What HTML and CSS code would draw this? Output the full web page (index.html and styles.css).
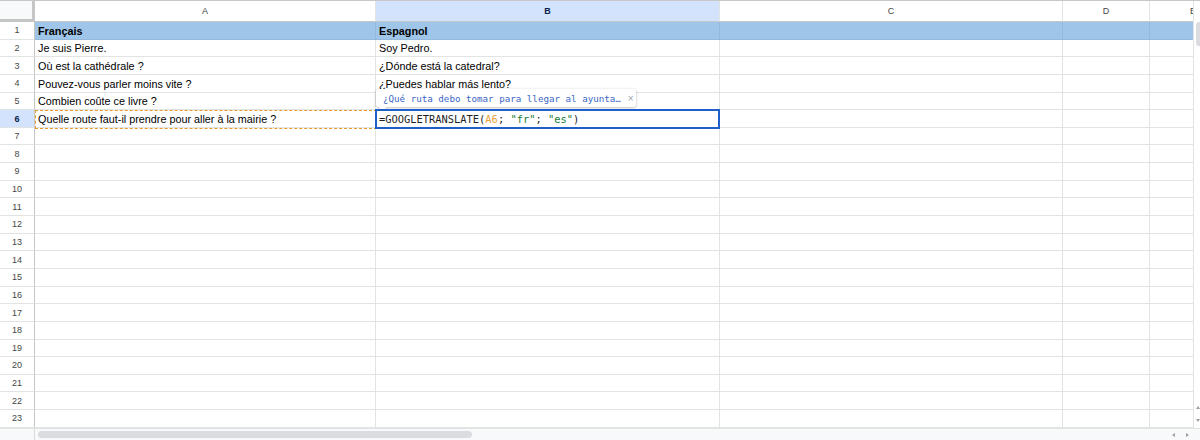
FILE: index.html
```html
<!DOCTYPE html>
<html lang="fr">
<head>
<meta charset="utf-8">
<link rel="stylesheet" href="styles.css">
</head>
<body>
<div class="app">
  <div class="main">
    <div class="grid">
      <div class="row head">
        <div class="c rh corner"></div>
        <div class="c ca">A</div>
        <div class="c cb sel">B</div>
        <div class="c cc">C</div>
        <div class="c cd">D</div>
        <div class="c ce">E</div>
      </div>
      <div class="row r1">
        <div class="c rh">1</div>
        <div class="c ca t b">Français</div>
        <div class="c cb t b">Espagnol</div>
        <div class="c cc"></div>
        <div class="c cd"></div>
        <div class="c ce"></div>
      </div>
      <div class="row">
        <div class="c rh">2</div>
        <div class="c ca t">Je suis Pierre.</div>
        <div class="c cb t">Soy Pedro.</div>
        <div class="c cc"></div><div class="c cd"></div><div class="c ce"></div>
      </div>
      <div class="row">
        <div class="c rh">3</div>
        <div class="c ca t">Où est la cathédrale ?</div>
        <div class="c cb t">¿Dónde está la catedral?</div>
        <div class="c cc"></div><div class="c cd"></div><div class="c ce"></div>
      </div>
      <div class="row">
        <div class="c rh">4</div>
        <div class="c ca t">Pouvez-vous parler moins vite ?</div>
        <div class="c cb t">¿Puedes hablar más lento?</div>
        <div class="c cc"></div><div class="c cd"></div><div class="c ce"></div>
      </div>
      <div class="row">
        <div class="c rh">5</div>
        <div class="c ca t">Combien coûte ce livre ?</div>
        <div class="c cb t"></div>
        <div class="c cc"></div><div class="c cd"></div><div class="c ce"></div>
      </div>
      <div class="row">
        <div class="c rh sel">6</div>
        <div class="c ca t">Quelle route faut-il prendre pour aller à la mairie ?</div>
        <div class="c cb t"></div>
        <div class="c cc"></div><div class="c cd"></div><div class="c ce"></div>
      </div>
      <div class="row"><div class="c rh">7</div><div class="c ca"></div><div class="c cb"></div><div class="c cc"></div><div class="c cd"></div><div class="c ce"></div></div>
      <div class="row"><div class="c rh">8</div><div class="c ca"></div><div class="c cb"></div><div class="c cc"></div><div class="c cd"></div><div class="c ce"></div></div>
      <div class="row"><div class="c rh">9</div><div class="c ca"></div><div class="c cb"></div><div class="c cc"></div><div class="c cd"></div><div class="c ce"></div></div>
      <div class="row"><div class="c rh">10</div><div class="c ca"></div><div class="c cb"></div><div class="c cc"></div><div class="c cd"></div><div class="c ce"></div></div>
      <div class="row"><div class="c rh">11</div><div class="c ca"></div><div class="c cb"></div><div class="c cc"></div><div class="c cd"></div><div class="c ce"></div></div>
      <div class="row"><div class="c rh">12</div><div class="c ca"></div><div class="c cb"></div><div class="c cc"></div><div class="c cd"></div><div class="c ce"></div></div>
      <div class="row"><div class="c rh">13</div><div class="c ca"></div><div class="c cb"></div><div class="c cc"></div><div class="c cd"></div><div class="c ce"></div></div>
      <div class="row"><div class="c rh">14</div><div class="c ca"></div><div class="c cb"></div><div class="c cc"></div><div class="c cd"></div><div class="c ce"></div></div>
      <div class="row"><div class="c rh">15</div><div class="c ca"></div><div class="c cb"></div><div class="c cc"></div><div class="c cd"></div><div class="c ce"></div></div>
      <div class="row"><div class="c rh">16</div><div class="c ca"></div><div class="c cb"></div><div class="c cc"></div><div class="c cd"></div><div class="c ce"></div></div>
      <div class="row"><div class="c rh">17</div><div class="c ca"></div><div class="c cb"></div><div class="c cc"></div><div class="c cd"></div><div class="c ce"></div></div>
      <div class="row"><div class="c rh">18</div><div class="c ca"></div><div class="c cb"></div><div class="c cc"></div><div class="c cd"></div><div class="c ce"></div></div>
      <div class="row"><div class="c rh">19</div><div class="c ca"></div><div class="c cb"></div><div class="c cc"></div><div class="c cd"></div><div class="c ce"></div></div>
      <div class="row"><div class="c rh">20</div><div class="c ca"></div><div class="c cb"></div><div class="c cc"></div><div class="c cd"></div><div class="c ce"></div></div>
      <div class="row"><div class="c rh">21</div><div class="c ca"></div><div class="c cb"></div><div class="c cc"></div><div class="c cd"></div><div class="c ce"></div></div>
      <div class="row"><div class="c rh">22</div><div class="c ca"></div><div class="c cb"></div><div class="c cc"></div><div class="c cd"></div><div class="c ce"></div></div>
      <div class="row"><div class="c rh">23</div><div class="c ca"></div><div class="c cb"></div><div class="c cc"></div><div class="c cd"></div><div class="c ce"></div></div>
    </div>
    <div class="vscroll">
      <div class="vthumb"></div>
      <div class="varrows">
        <span class="arr up"></span>
        <span class="arr down"></span>
      </div>
    </div>
  </div>
  <div class="hscroll">
    <div class="hcorner"></div>
    <div class="htrack"><div class="hthumb"></div></div>
    <div class="harrows">
      <span class="arr left"></span>
      <span class="arr right"></span>
    </div>
  </div>

  <div class="copy-marquee"></div>
  <div class="tip">
    <span class="tip-text">¿Qué ruta debo tomar para llegar al ayunta…</span>
    <span class="tip-x">×</span>
    <span class="tip-notch"></span>
  </div>
  <div class="editor"><span class="f-fn">=GOOGLETRANSLATE(</span><span class="f-ref">A6</span><span class="f-fn">; </span><span class="f-str">"fr"</span><span class="f-fn">; </span><span class="f-str">"es"</span><span class="f-fn">)</span></div>
</div>
</body>
</html>
```

FILE: styles.css
```css
* { box-sizing: border-box; }
html, body { margin: 0; padding: 0; background: #fff; }
body {
  font-family: "Liberation Sans", Arial, sans-serif;
  color: #000;
}
.app {
  position: relative;
  width: 1200px;
  height: 440px;
  overflow: hidden;
  display: flex;
  flex-direction: column;
}
.main {
  display: flex;
  height: 428px;
  border-top: 1px solid #c7c7c7;
}
.grid {
  width: 1193px;
  overflow: hidden;
  flex: none;
}
.row {
  display: flex;
  height: 17.65px;
}
.row.head { height: 21px; }
.c {
  flex: none;
  height: 100%;
  border-right: 1px solid #e2e3e3;
  border-bottom: 1px solid #e2e3e3;
  white-space: nowrap;
  overflow: hidden;
}
.rh { width: 35px; border-right-color: #c7c7c7; }
.ca { width: 341px; }
.cb { width: 344px; }
.cc { width: 343px; }
.cd { width: 87px; }
.ce { width: 87px; }

.head .c {
  font-size: 9px;
  color: #444746;
  display: flex;
  align-items: center;
  justify-content: center;
  border-bottom-color: #c7c7c7;
  background: #fff;
}
.head .corner {
  background: #f8f9fa;
  border-right: 3px solid #c4c7c5;
  border-bottom: 3px solid #c4c7c5;
}
.head .sel {
  background: #d3e3fd;
  font-weight: bold;
  color: #0b1f4a;
}

.rh {
  font-size: 9px;
  color: #444746;
  display: flex;
  align-items: center;
  justify-content: center;
}
.rh.sel {
  background: #d3e3fd;
  font-weight: bold;
  color: #0b1f4a;
}

.t {
  font-size: 10.8px;
  display: flex;
  align-items: flex-end;
  padding-left: 3px;
  padding-bottom: 1px;
  line-height: 14px;
}
.b { font-weight: bold; }

.r1 .ca, .r1 .cb, .r1 .cc, .r1 .cd, .r1 .ce {
  background: #9fc5e8;
  border-right-color: #94b9dc;
  border-bottom-color: #94b9dc;
}

.vscroll {
  flex: 1;
  position: relative;
  background: #fff;
  border-left: 1px solid #e2e3e3;
  display: flex;
  flex-direction: column;
  justify-content: space-between;
}
.vthumb {
  margin: 21px 0 0 2px;
  height: 24px;
  background: #dadce0;
  border-radius: 3px 0 0 3px;
}
.varrows {
  display: flex;
  flex-direction: column;
  gap: 10px;
  align-items: center;
  padding: 0 0 6px 1px;
}
.arr {
  width: 0;
  height: 0;
  display: block;
}
.arr.up { border-left: 2px solid transparent; border-right: 2px solid transparent; border-bottom: 3px solid #9aa0a6; }
.arr.down { border-left: 2px solid transparent; border-right: 2px solid transparent; border-top: 3px solid #9aa0a6; }
.arr.left { border-top: 2px solid transparent; border-bottom: 2px solid transparent; border-right: 3px solid #9aa0a6; }
.arr.right { border-top: 2px solid transparent; border-bottom: 2px solid transparent; border-left: 3px solid #9aa0a6; }

.hscroll {
  height: 12px;
  display: flex;
  background: #f8f9fa;
  border-top: 1px solid #e2e3e3;
}
.hcorner {
  width: 35px;
  border-right: 1px solid #dadce0;
  flex: none;
}
.htrack {
  flex: 1;
  padding: 2px 0 0 3px;
}
.hthumb {
  width: 434px;
  height: 7px;
  background: #dadce0;
  border-radius: 4px;
}
.harrows {
  width: 40px;
  display: flex;
  align-items: center;
  gap: 11px;
  padding-left: 12px;
  flex: none;
}

.copy-marquee {
  position: absolute;
  left: 35px;
  top: 110px;
  width: 342px;
  height: 19px;
  border: 1px dashed #e99a2c;
  border-right: none;
}
.editor {
  position: absolute;
  left: 375px;
  top: 109px;
  width: 345px;
  height: 20px;
  border: 2px solid #1f5fc9;
  background: #fff;
  font-family: "DejaVu Sans Mono", monospace;
  font-size: 10.4px;
  padding: 1px 0 0 2px;
  line-height: 14px;
  white-space: nowrap;
  color: #1f1f1f;
}
.f-ref { color: #e8a13c; }
.f-str { color: #188038; }

.tip {
  position: absolute;
  left: 376px;
  top: 89px;
  width: 260px;
  height: 18px;
  background: #fff;
  border-radius: 2px;
  box-shadow: 0 1px 3px rgba(60, 64, 67, 0.3), 0 0 1px rgba(60, 64, 67, 0.2);
  display: flex;
  align-items: center;
  padding-left: 7px;
  font-family: "DejaVu Sans Mono", monospace;
  font-size: 9.2px;
  color: #3b66c4;
  white-space: nowrap;
}
.tip-x {
  margin-left: 7px;
  color: #a0a4a8;
  font-family: "Liberation Sans", sans-serif;
  font-size: 10px;
}
.tip-notch {
  position: absolute;
  left: 4px;
  bottom: -3px;
  width: 5px;
  height: 5px;
  background: #fff;
  transform: rotate(45deg);
  box-shadow: 1px 1px 1px rgba(60, 64, 67, 0.2);
}
```
